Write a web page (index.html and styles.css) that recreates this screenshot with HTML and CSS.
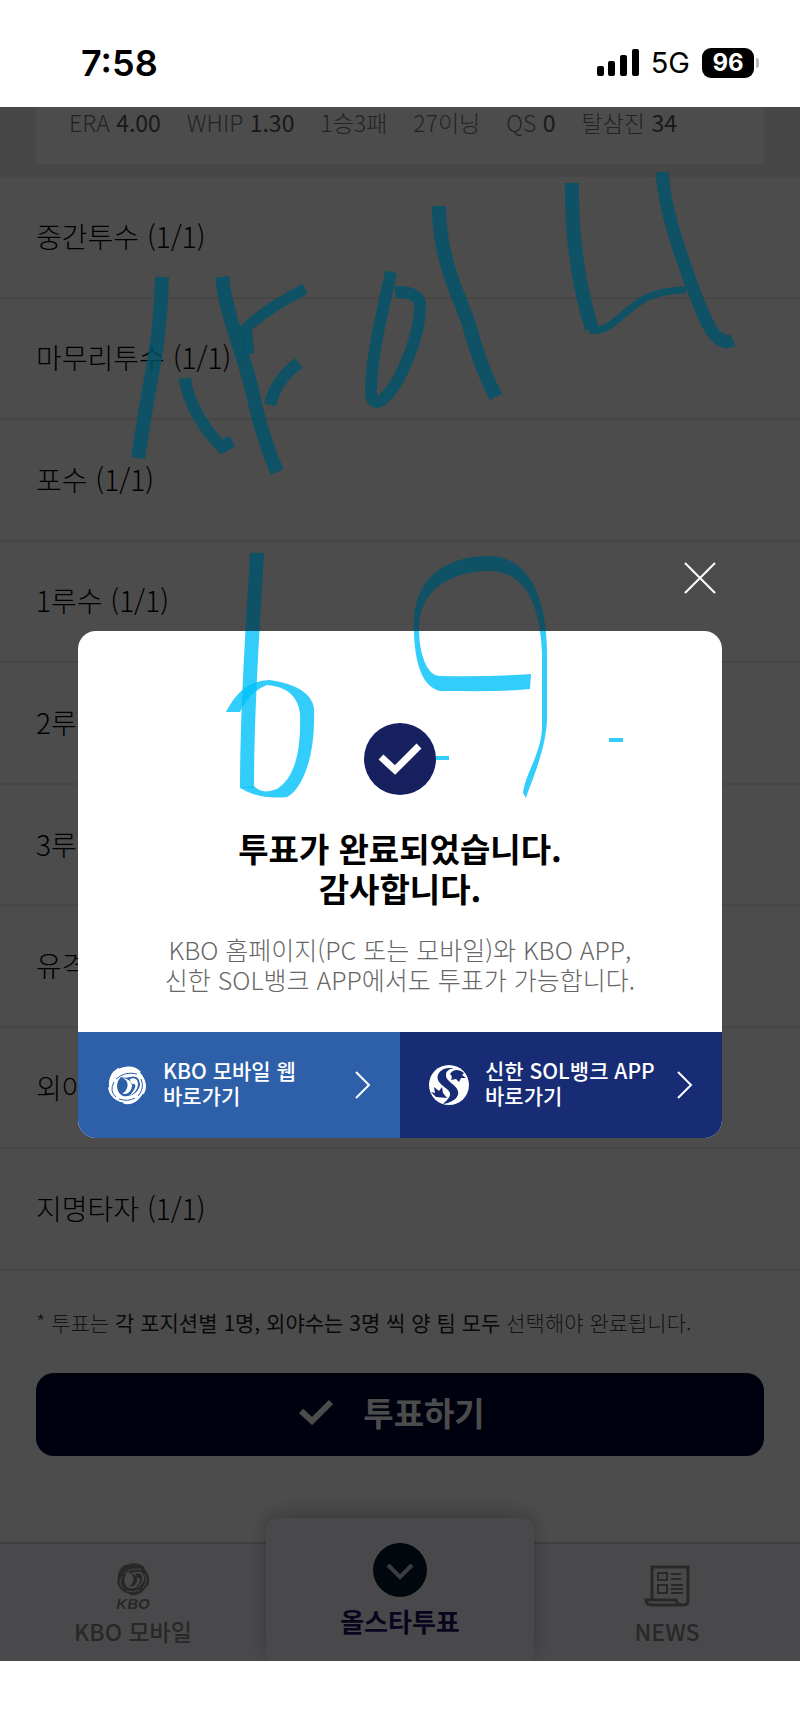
FILE: index.html
```html
<!DOCTYPE html>
<html lang="ko">
<head>
  <meta charset="UTF-8">
  <meta name="viewport" content="width=device-width, initial-scale=1.0">
  <title>KBO 올스타 투표</title>
  <link rel="stylesheet" href="styles.css">
</head>
<body>
  <!-- shared shapes -->
  <svg class="defs" aria-hidden="true">
    <symbol id="kbo" viewBox="0 0 40 40">
      <g fill="currentColor">
        <circle cx="20" cy="20" r="18"/>
        <path id="blade" d="M8 8C15 0 27-1 34 7C28 10 14 14 8 8Z"/>
        <use href="#blade" transform="rotate(72 20 20)"/>
        <use href="#blade" transform="rotate(144 20 20)"/>
        <use href="#blade" transform="rotate(216 20 20)"/>
        <use href="#blade" transform="rotate(288 20 20)"/>
      </g>
      <g class="kbo-cut">
        <path d="M14 12C8 17 9 28 16 31C23 32 31 29 33 20C33 13 29 10 23 12C20 13 17 13 14 12Z"/>
        <path d="M9 14Q18 6 30 9M34 14Q38 23 31 31M7 17Q2 26 9 32M12 34Q21 37 28 33" fill="none" stroke-width="1"/>
      </g>
      <g fill="currentColor">
        <path d="M15 13C19 14 22 18 20 23C19 26 17 28 15 28C20 31 25 26 25 20C24 16 20 13 15 13Z"/>
        <path d="M23 14C27 12 31 14 31 19C31 24 27 29 22 31C27 26 29 22 28 19C25 20 23 17 23 14Z"/>
      </g>
    </symbol>
    <symbol id="sol" viewBox="0 0 40 40">
      <circle cx="20" cy="20" r="20" fill="currentColor"/>
      <path class="sol-cut" d="M21 3C11 3 5 11 11 18C15 23 22 25 21 30C20 34 16 37 14 39C22 38 31 33 29 26C27 19 16 16 17 10C17 6 20 4 25 3Z"/>
      <path class="sol-cut" d="M21 9C24 4 30 4 35 8L33 10L37 13L32 13L30 17L27 14L22 15Q24 11 21 9Z"/>
      <path class="sol-cut" d="M18 33L7 32L2 27L6 28L5 22L10 26L13 22L14 28Z"/>
    </symbol>
    <g id="ink" stroke-width="14" fill="none" stroke="currentColor">
      <path d="M162 277Q161 325 153 368T138 458"/>
      <path d="M222 277C226 315 244 355 252 390C258 420 266 446 277 472"/>
      <path d="M305 289C285 299 262 313 246 328L249 354" stroke-width="11"/>
      <path d="M299 363Q276 379 270 405" stroke-width="12"/>
      <path d="M185 378C187 402 205 430 222 447L232 441" stroke-width="12"/>
      <path d="M391 272C382 315 371 355 371 394C374 414 392 393 403 370C413 349 421 322 420 303Q417 291 395 292" stroke-width="12"/>
      <path d="M439 206C439 265 463 302 470 328Q481 369 496 397"/>
      <path d="M572 183C571 239 579 287 592 329"/>
      <path d="M590 330C610 335 624 308 648 297Q664 290 686 290" stroke-width="7"/>
      <path d="M662 172C665 213 680 252 692 286C702 310 713 350 733 340" stroke-width="13"/>
      <path d="M257 553C254 615 247 690 247 787"/>
      <path fill="currentColor" stroke="none" d="M226 711Q242 679 270 679Q310 685 314 707C316 760 300 790 287 796Q260 799 240 787L254 785Q262 794 277 788C297 775 301 745 300 712Q296 686 267 684Q250 690 240 711Z"/>
      <path fill="currentColor" stroke="none" d="M531 673L530 688C500 691 470 690 440 690C418 685 413 650 414 617C417 575 450 556 487 556C530 555 547 600 547 653V720C545 753 530 783 526 797L523 792C525 773 541 753 542 727V653C540 600 523 570 487 571C450 572 420 590 419 627C419 653 427 675 440 675Q490 676 531 673Z"/>
      <path d="M435 757H449M609 739H623" stroke-width="4"/>
    </g>
  </svg>

  <header class="status">
    <time>7:58</time>
    <div class="status-right">
      <svg class="signal" viewBox="0 0 42 28" aria-hidden="true">
        <rect x="0" y="17" width="7" height="10" rx="2"/>
        <rect x="11" y="12" width="7" height="15" rx="2"/>
        <rect x="23" y="6" width="7" height="21" rx="2"/>
        <rect x="35" y="0" width="7" height="27" rx="2"/>
      </svg>
      <span class="network">5G</span>
      <span class="battery">96</span>
    </div>
  </header>

  <main class="screen">
    <section class="player">
      <div class="stats">
        <span>ERA <b>4.00</b></span>
        <span>WHIP <b>1.30</b></span>
        <span>1승3패</span>
        <span>27이닝</span>
        <span>QS <b>0</b></span>
        <span>탈삼진 <b>34</b></span>
      </div>
    </section>

    <ul class="positions">
      <li>중간투수 (1/1)</li>
      <li>마무리투수 (1/1)</li>
      <li>포수 (1/1)</li>
      <li>1루수 (1/1)</li>
      <li>2루수 (1/1)</li>
      <li>3루수 (1/1)</li>
      <li>유격수 (1/1)</li>
      <li>외야수 (3/3)</li>
      <li>지명타자 (1/1)</li>
    </ul>

    <p class="note">* 투표는 <b>각 포지션별 1명, 외야수는 3명 씩 양 팀 모두</b> 선택해야 완료됩니다.</p>

    <button class="vote" type="button">
      <svg viewBox="0 0 34 26" aria-hidden="true"><path d="M2 12L13 22L32 3" fill="none" stroke="currentColor" stroke-width="6"/></svg>
      투표하기
    </button>

    <nav class="tabs">
      <a class="tab" href="#mobile">
        <span class="kbo-mark"><svg viewBox="0 0 40 40" aria-hidden="true"><use href="#kbo"/></svg><i>KBO</i></span>
        KBO 모바일
      </a>
      <a class="tab tab-active" href="#vote">
        <svg class="down" viewBox="0 0 54 54" aria-hidden="true">
          <circle cx="27" cy="27" r="27" fill="#00182c"/>
          <path d="M15 22L27 34L39 22" fill="none" stroke="#c9c9d8" stroke-width="4"/>
        </svg>
        올스타투표
      </a>
      <a class="tab" href="#news">
        <svg class="news" viewBox="0 0 46 42" fill="none" stroke="currentColor" stroke-width="3" aria-hidden="true">
          <path d="M8 34V2H44V36Q44 40 39 40H8Q2 40 2 35H32Q33 40 38 40"/>
          <path d="M14 8H23V15H14ZM14 20H23V28H14ZM27 9H37M27 14H37M27 20H39M27 24H39M27 28H39" stroke-width="2"/>
        </svg>
        NEWS
      </a>
    </nav>

    <div class="overlay">
      <svg class="ink-page" viewBox="0 107 800 1553" aria-hidden="true"><use href="#ink"/></svg>
      <div class="popup" role="dialog" aria-labelledby="popup-title">
        <button class="close" type="button" aria-label="닫기">
          <svg viewBox="0 0 32 32" aria-hidden="true"><path d="M1 1L31 31M31 1L1 31" stroke="#fff" stroke-width="2"/></svg>
        </button>
        <div class="popup-box">
          <svg class="ink-popup" viewBox="78 630 644 507" aria-hidden="true"><use href="#ink"/></svg>
          <div class="popup-body">
            <svg class="done" viewBox="0 0 74 74" aria-hidden="true">
              <circle cx="37" cy="37" r="36" fill="#17215f"/>
              <path d="M18 35L32 48L56 24" fill="none" stroke="#fff" stroke-width="7"/>
            </svg>
            <h1 id="popup-title">투표가 완료되었습니다.<br>감사합니다.</h1>
            <p>KBO 홈페이지(PC 또는 모바일)와 KBO APP,<br>신한 SOL뱅크 APP에서도 투표가 가능합니다.</p>
          </div>
          <div class="links">
            <a class="link link-kbo" href="#kbo-web">
              <svg class="logo" viewBox="0 0 40 40" aria-hidden="true"><use href="#kbo"/></svg>
              <span>KBO 모바일 웹<br>바로가기</span>
              <svg class="arrow" viewBox="0 0 16 28" aria-hidden="true"><path d="M1 1L14 14L1 27" fill="none" stroke="currentColor" stroke-width="2"/></svg>
            </a>
            <a class="link link-sol" href="#sol-app">
              <svg class="logo" viewBox="0 0 40 40" aria-hidden="true"><use href="#sol"/></svg>
              <span>신한 SOL뱅크 APP<br>바로가기</span>
              <svg class="arrow" viewBox="0 0 16 28" aria-hidden="true"><path d="M1 1L14 14L1 27" fill="none" stroke="currentColor" stroke-width="2"/></svg>
            </a>
          </div>
        </div>
      </div>
    </div>
  </main>
</body>
</html>
```
FILE: styles.css
```css
:root {
  --font-main: "Noto Sans CJK KR", "Noto Sans", sans-serif;
  --font-status: Inter, sans-serif;
  --side: 36px;
  --navy: #172c75;
  --blue: #2e5fa9;
  --tab-bg: #f5f6fc;
}

* {
  box-sizing: border-box;
}

body {
  margin: 0;
  background: #fff;
  color: #000;
  font-family: var(--font-main);
}

a {
  color: inherit;
  text-decoration: none;
}

button {
  border: 0;
  padding: 0;
  font-family: inherit;
}

.defs {
  position: absolute;
  width: 0;
  height: 0;
}

/* status bar */
.status {
  display: flex;
  align-items: center;
  justify-content: space-between;
  height: 107px;
  padding: 18px 46px 0 81px;
  color: #000;
  font-family: var(--font-status);
}

.status time {
  font-size: 36px;
  font-weight: 600;
}

.status-right {
  display: flex;
  align-items: center;
  gap: 12px;
}

.signal {
  width: 42px;
  height: 28px;
}

.network {
  font-size: 29px;
}

.battery {
  position: relative;
  width: 52px;
  border-radius: 9px;
  background: #000;
  color: #fff;
  font-size: 24px;
  font-weight: 700;
  line-height: 30px;
  text-align: center;
}

.battery::after {
  content: "";
  position: absolute;
  top: 10px;
  right: -5px;
  width: 3px;
  height: 10px;
  border-radius: 0 3px 3px 0;
  background: #bbb;
}

/* page */
.screen {
  position: relative;
  background: #fff;
}

.player {
  padding: 0 var(--side) 13px;
  background: #eee;
}

.stats {
  display: flex;
  gap: 26px;
  height: 57px;
  padding: 0 33px;
  background: #fff;
  color: #777;
  font-size: 23px;
  font-weight: 300;
  line-height: 30px;
  white-space: nowrap;
}

.stats b {
  color: #555;
}

.positions {
  display: grid;
  grid-auto-rows: 1fr;
  min-height: 1094px;
  margin: 0;
  padding: 0;
  list-style: none;
}

.positions li {
  display: flex;
  align-items: center;
  padding: 0 var(--side) 2px;
  border-bottom: 2px solid #eaeaea;
  font-size: 28px;
  font-weight: 300;
}

.note {
  margin: 36px var(--side);
  color: #444;
  font-size: 21px;
  font-weight: 300;
  line-height: 30px;
  white-space: nowrap;
}

.note b {
  color: #222;
}

.vote {
  display: flex;
  align-items: center;
  justify-content: center;
  gap: 30px;
  width: calc(100% - 72px);
  height: 83px;
  margin: 0 var(--side);
  padding: 0 16px 6px 0;
  border-radius: 18px;
  background: #000532;
  color: #fff;
  font-size: 33px;
  font-weight: 700;
}

.vote svg {
  width: 34px;
  height: 26px;
}

.tabs {
  display: grid;
  grid-template-columns: 1fr 268px 1fr;
  height: 119px;
  margin-top: 86px;
  border-top: 2px solid #d4d4e0;
  background: var(--tab-bg);
  color: #888;
  font-size: 23px;
  font-weight: 500;
  line-height: 32px;
}

.tab {
  display: flex;
  flex-direction: column;
  align-items: center;
  justify-content: flex-end;
  gap: 4px;
  padding-bottom: 14px;
}

.tab-active {
  gap: 8px;
  margin-top: -26px;
  padding-bottom: 24px;
  border-radius: 12px 12px 0 0;
  background: var(--tab-bg);
  box-shadow: 0 -4px 20px rgba(0, 0, 0, 0.25);
  clip-path: inset(-40px -30px 0);
  color: #1c1464;
  font-size: 26px;
  font-weight: 700;
}

.kbo-mark {
  display: flex;
  flex-direction: column;
  align-items: center;
  font-family: "Liberation Sans", sans-serif;
  font-size: 15px;
  font-weight: 700;
  line-height: 15px;
}

.kbo-mark svg {
  width: 34px;
  height: 34px;
}

.kbo-cut {
  fill: var(--tab-bg);
  stroke: var(--tab-bg);
  stroke-width: 0;
}

.down {
  width: 54px;
  height: 54px;
}

.news {
  width: 46px;
  height: 42px;
  margin-bottom: 4px;
}

/* popup */
.overlay {
  position: absolute;
  inset: 0;
  display: flex;
  align-items: center;
  justify-content: center;
  background: rgba(0, 0, 0, 0.7);
}

.ink-page {
  position: absolute;
  top: 0;
  left: 0;
  width: 100%;
  color: #00546c;
}

.ink-popup {
  position: absolute;
  top: 0;
  left: 0;
  width: 100%;
  color: #00c0fa;
}

#ink path {
  opacity: 0.8;
}

.popup {
  position: relative;
  width: calc(100% - 156px);
}

.popup-box {
  position: relative;
  overflow: hidden;
  border-radius: 18px;
  background: #fff;
}

.close {
  position: absolute;
  top: -70px;
  right: 5px;
  width: 34px;
  height: 34px;
  background: none;
}

.close svg {
  display: block;
  width: 32px;
  height: 32px;
  margin: 0 auto;
}

.popup-body {
  position: relative;
  padding: 91px 24px 38px;
  text-align: center;
}

.done {
  display: block;
  width: 74px;
  height: 74px;
  margin: 0 auto 32px;
}

.popup-body h1 {
  margin: 0 0 26px;
  font-size: 33px;
  font-weight: 700;
  line-height: 40px;
}

.popup-body p {
  margin: 0;
  color: #666;
  font-size: 25px;
  font-weight: 300;
  line-height: 30px;
  white-space: nowrap;
}

.links {
  position: relative;
  display: grid;
  grid-template-columns: 1fr 1fr;
}

.link {
  display: flex;
  align-items: center;
  height: 106px;
  padding: 0 29px;
  color: #fff;
  font-size: 21px;
  font-weight: 500;
  line-height: 25px;
  white-space: nowrap;
}

.link span {
  flex: 1;
  padding-bottom: 3px;
}

.link-kbo {
  --tab-bg: var(--blue);
  background: var(--blue);
}

.link-sol {
  background: var(--navy);
}

.logo {
  width: 40px;
  height: 40px;
  margin-right: 16px;
}

.sol-cut {
  fill: var(--navy);
}

.arrow {
  width: 16px;
  height: 28px;
}
```
